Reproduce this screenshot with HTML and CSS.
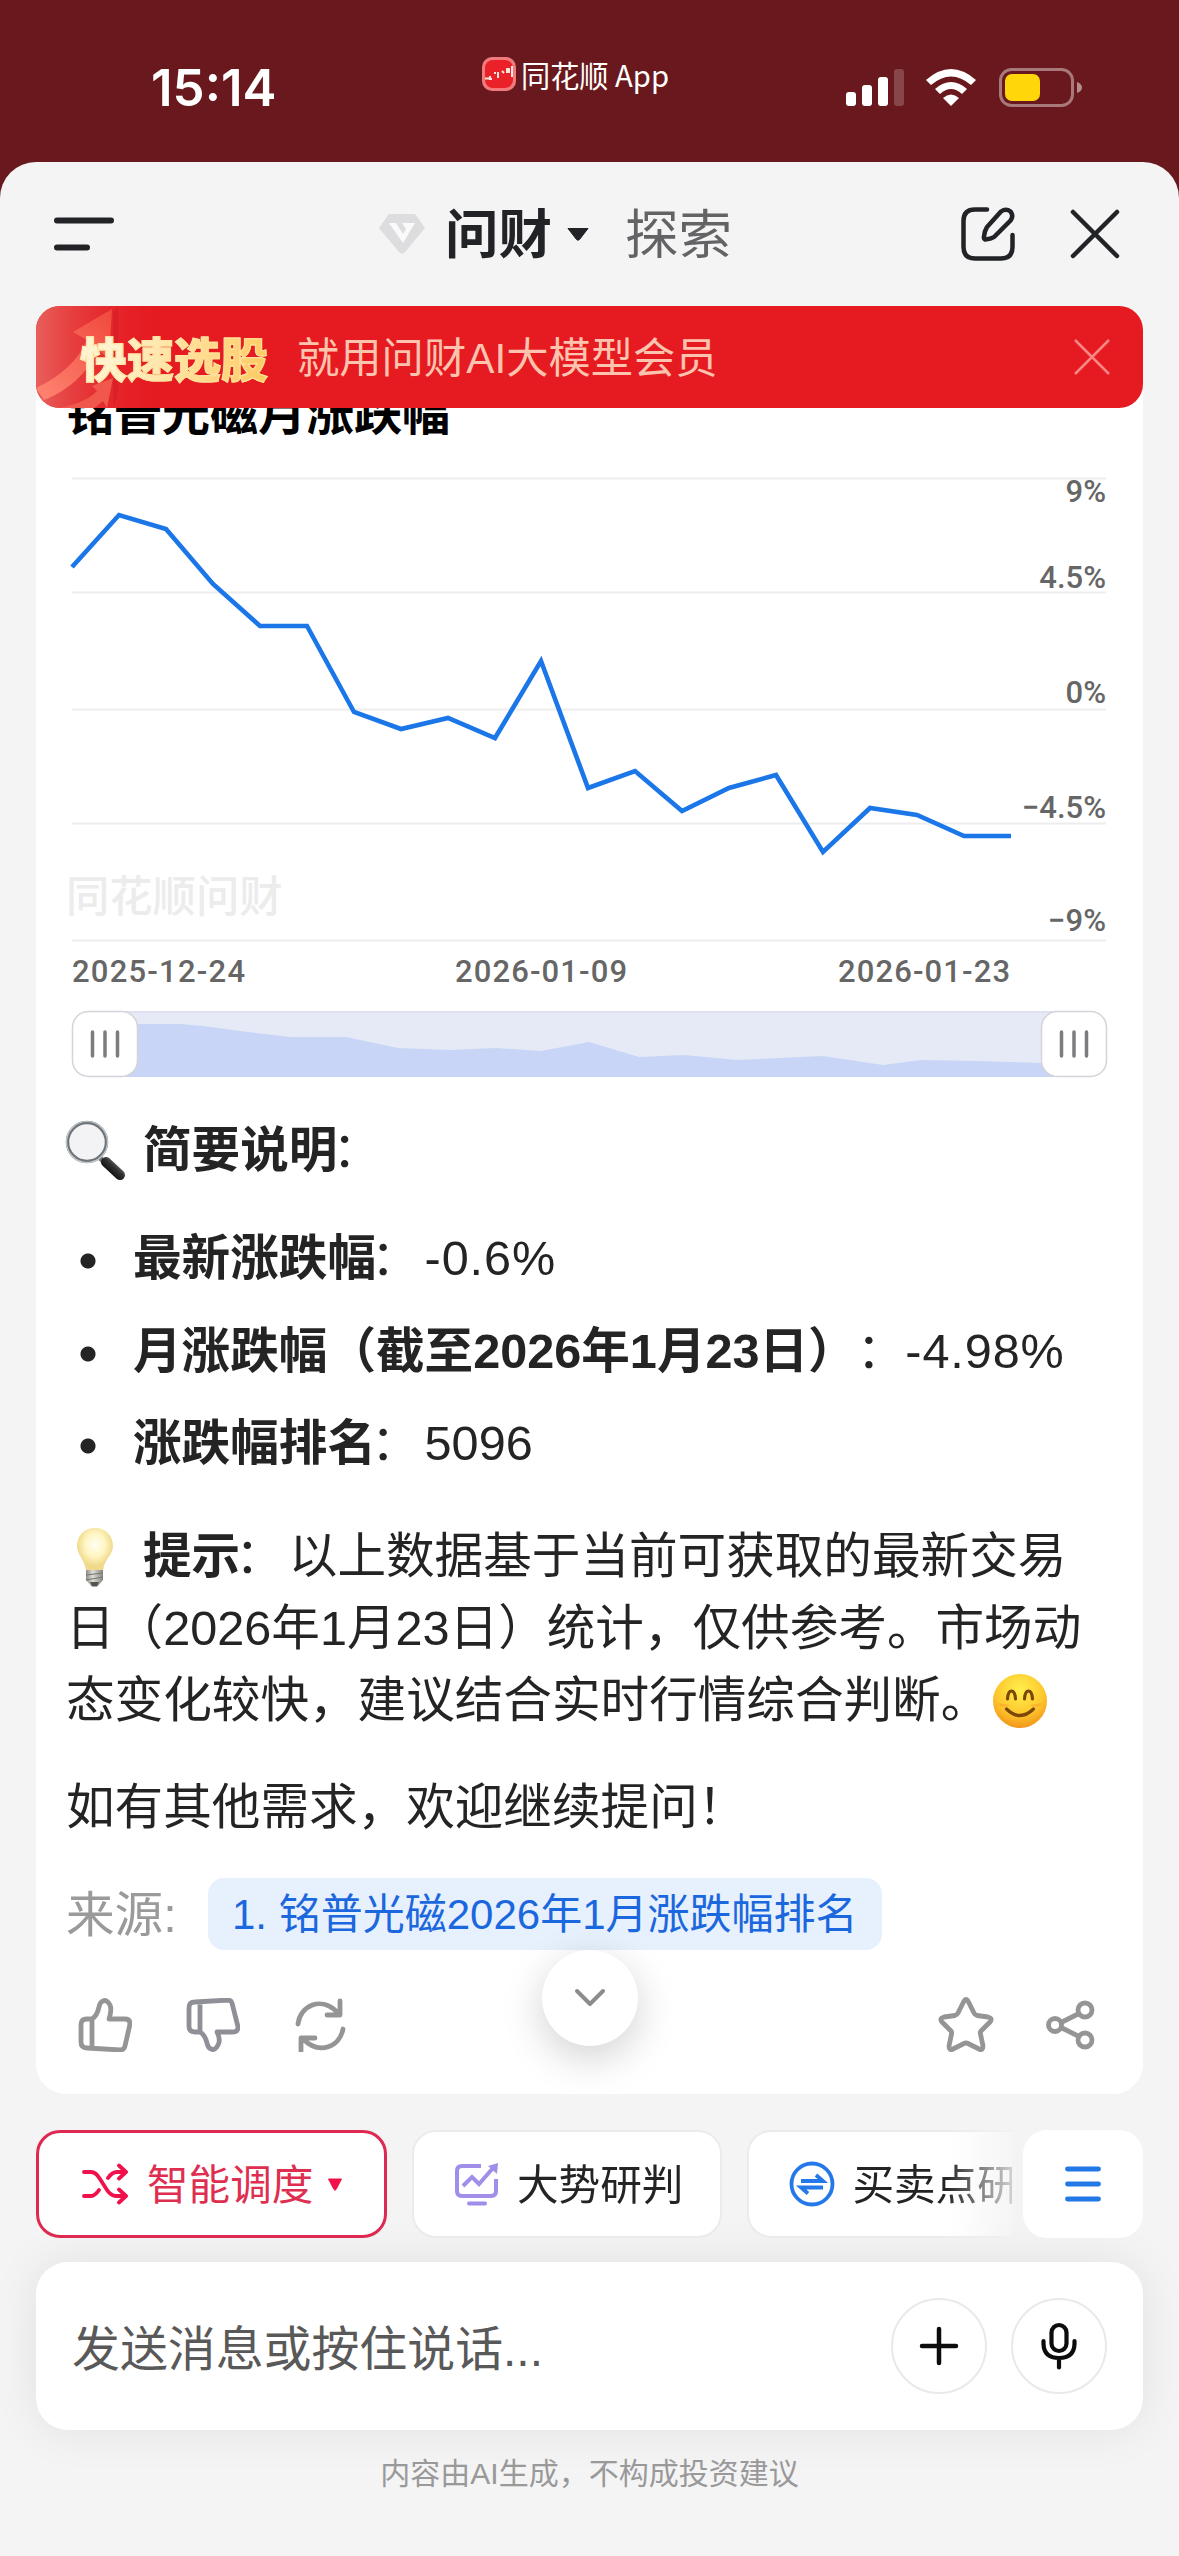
FILE: index.html
```html
<!DOCTYPE html>
<html lang="zh-CN">
<head>
<meta charset="utf-8">
<title>问财</title>
<link rel="stylesheet" href="styles.css">
</head>
<body>
<header class="status">
  <div class="time">15:14</div>
  <div class="app-tag">
    <svg width="34" height="34" viewBox="0 0 34 34"><rect width="34" height="34" rx="10" fill="#f07a7c"/><rect x="3" y="3" width="28" height="28" rx="8" fill="#ea2128"/><path d="M3 21.500h4M8 19v3h2M12 16h2M16 15v6M20 14l2 2M25 11v5M27 11v5M30 9v11" stroke="#fde6dc" stroke-width="2" fill="none"/></svg>
    <span>同花顺 App</span>
  </div>
  <div class="indicators">
    <svg width="236" height="42" viewBox="846 67 236 42">
      <g fill="#fff"><rect x="846" y="92" width="10" height="14" rx="3"/><rect x="862" y="85" width="10" height="21" rx="3"/><rect x="878" y="77" width="10" height="29" rx="3"/><rect x="894" y="69" width="10" height="37" rx="3" opacity=".2"/></g>
      <path d="M926 80Q951 58 976 80L971 85Q951 68 931 85Z" fill="#fff"/>
      <path d="M935 89Q951 75 967 89L962 94Q951 84 940 94Z" fill="#fff"/>
      <path d="M943 98Q951 91 959 98L951 106Z" fill="#fff"/>
      <rect x="1000.500" y="69.500" width="72" height="36" rx="11" fill="none" stroke="#fff" stroke-opacity=".42" stroke-width="3"/>
      <rect x="1005" y="74" width="35" height="27" rx="7" fill="#ffd60a"/>
      <path d="M1077 82q5 2 5 5.500t-5 5.500z" fill="#fff" opacity=".5"/>
    </svg>
  </div>
</header>

<main class="sheet">
  <nav class="topbar">
    <svg class="menu" width="62" height="36" viewBox="0 0 62 36"><path d="M4 4.500H58M4 31.500H34" stroke="#222326" stroke-width="6" stroke-linecap="round"/></svg>
    <div class="tabs">
      <svg class="gem" width="46" height="40" viewBox="0 0 46 40"><path d="M10 0H36L46 14 26 38Q23 41 20 38L0 14Z" fill="#dddddf"/><path d="M10 9H17L24 20 27 15 23 9H36L24 29Z" fill="#fafafa"/></svg>
      <b class="tab-on">问财</b>
      <svg class="caret" width="22" height="13" viewBox="0 0 22 13"><path d="M1 .5H21L12.500 11.500Q11 13 9.500 11.500Z" fill="#222326" stroke="#222326"/></svg>
      <span class="tab">探索</span>
    </div>
    <div class="tools">
      <svg width="56" height="56" viewBox="0 0 56 56" fill="none" stroke="#222326" stroke-width="4.500" stroke-linecap="round"><path d="M27 3.500H15Q3.500 3.500 3.500 15V41Q3.500 52.500 15 52.500H41Q52.500 52.500 52.500 41V29"/><path d="M41 5.500Q46 2 50.500 5.500 54 10 50.500 14.500L34 31Q31 33 25 33.500 23.500 33 24 30.500 24.500 25 27 21Z"/></svg>
      <svg width="50" height="50" viewBox="0 0 50 50"><path d="M3 3L47 47M47 3L3 47" stroke="#222326" stroke-width="4.500" stroke-linecap="round"/></svg>
    </div>
  </nav>

  <section class="banner">
    <svg class="banner-art" width="130" height="102" viewBox="0 0 130 102">
      <defs>
        <linearGradient id="glow"><stop offset="0" stop-color="#e8605c"/><stop offset="1" stop-color="#e51b21" stop-opacity="0"/></linearGradient>
        <linearGradient id="arrow" x1="0" y1="1" x2="1" y2="0"><stop offset="0" stop-color="#ff8672"/><stop offset="1" stop-color="#f0483c"/></linearGradient>
      </defs>
      <rect width="130" height="102" fill="url(#glow)"/>
      <path d="M77 6L82 0V90L77 100Z" fill="#b81820" opacity=".25"/>
      <path d="M0 82Q38 64 51 34L37 26 76 3 73 54 63 44Q44 80 8 94Z" fill="url(#arrow)"/>
      <path d="M22 102Q50 97 61 85L56 80 77 72 71 102 67 95 58 102Z" fill="#f0584c"/>
    </svg>
    <strong class="banner-title">快速选股</strong>
    <span class="banner-text">就用问财AI大模型会员</span>
    <svg class="banner-x" width="38" height="38" viewBox="0 0 38 38"><path d="M2 2L36 36M36 2L2 36" stroke="#f98585" stroke-width="2.500"/></svg>
  </section>

  <article class="card">
    <h2 class="chart-title">铭普光磁月涨跌幅</h2>
    <svg class="chart" width="1107" height="653" viewBox="36 437 1107 653">
      <path d="M72 478.500H1106M72 592.500H1106M72 709.500H1106M72 823.500H1106M72 940.500H1106" stroke="#ededed" stroke-width="2"/>
      <text class="mark" x="66" y="912">同花顺问财</text>
      <polyline fill="none" stroke="#1b76e8" stroke-width="4.600" points="72,567 119,515 166,529 213,584 260,626 307,626 354,712 401,729 448,718 495,738 541,661 588,788 635,771 682,811 729,788 776,775 823,852 870,808 917,815 964,836 1011,836"/>
      <g class="axis" text-anchor="end"><text x="1106" y="502">9%</text><text x="1106" y="588">4.5%</text><text x="1106" y="703">0%</text><text x="1106" y="818">−4.5%</text><text x="1106" y="931">−9%</text></g>
      <g class="axis"><text x="72" y="982" textLength="173">2025-12-24</text><text x="455" y="982" textLength="172">2026-01-09</text><text x="838" y="982" textLength="172">2026-01-23</text></g>
      <rect x="105" y="1011" width="968" height="66" fill="#e5eaf6"/>
      <path d="M105 1012H1073" stroke="#dfe0f2" stroke-width="2"/>
      <path d="M105 1077V1026L135 1024H180L203 1026 248 1032 290 1037H346L398 1048 451 1050 496 1048 541 1051 589 1042 639 1057 684 1055 737 1060 823 1056 883 1065 921 1060 977 1061 1041 1063 1073 1065V1077Z" fill="#c9d5f7"/>
      <g fill="#fff" stroke="#d4d4da" stroke-width="1.500"><rect x="72.500" y="1011.500" width="65" height="65" rx="16"/><rect x="1041.500" y="1011.500" width="65" height="65" rx="16"/></g>
      <path d="M92.500 1032V1056M105 1032V1056M117.500 1032V1056M1061.500 1032V1056M1074 1032V1056M1086.500 1032V1056" stroke="#7c7c80" stroke-width="3.500" stroke-linecap="round"/>
    </svg>

    <div class="answer">
      <p class="line heading">
        <svg class="emoji" width="62" height="62" viewBox="0 0 62 62"><defs><linearGradient id="handle" x1="0" y1="1" x2="1" y2="0"><stop offset="0" stop-color="#000"/><stop offset=".6" stop-color="#333"/><stop offset="1" stop-color="#888"/></linearGradient></defs><path d="M34 37L40 43" stroke="#777" stroke-width="5"/><path d="M41 42L55 55" stroke="url(#handle)" stroke-width="10" stroke-linecap="round"/><circle cx="22" cy="22" r="19.500" fill="#f3f3f5" stroke="#6f7479" stroke-width="3.500"/><circle cx="22" cy="22" r="20.500" fill="none" stroke="#c6ccd2" stroke-width="1.200"/></svg><b>简要说明</b><span class="colon">：</span>
      </p>
      <ul class="facts">
        <li><b>最新涨跌幅</b><span class="colon">：</span><span class="value">-0.6%</span></li>
        <li><b>月涨跌幅（截至2026年1月23日）</b>：<span class="value">-4.98%</span></li>
        <li><b>涨跌幅排名</b><span class="colon">：</span>5096</li>
      </ul>
      <p class="line tip">
        <svg class="emoji" width="62" height="62" viewBox="0 0 62 62"><defs><radialGradient id="bulb" cy=".4"><stop offset="0" stop-color="#fffef2"/><stop offset=".55" stop-color="#fff6c4"/><stop offset="1" stop-color="#f0d98a"/></radialGradient><linearGradient id="cap"><stop offset="0" stop-color="#8c8c88"/><stop offset=".4" stop-color="#deded8"/><stop offset="1" stop-color="#85857f"/></linearGradient></defs><path d="M30 2C19 2 12 10 12 20 12 29 19 32 21 44H38C40 32 48 29 48 20 48 10 41 2 30 2Z" fill="url(#bulb)"/><path d="M21 44H38V54L33 60H26L21 54Z" fill="url(#cap)"/><path d="M21 49L38 47M21 54L38 51" stroke="#77776f" stroke-width="1.200"/><path d="M25 56H34L32 60.500H27Z" fill="#55554f"/></svg><b>提示</b><span class="colon">：</span>以上数据基于当前可获取的最新交易<br>日（2026年1月23日）统计，仅供参考。市场动<br>态变化较快，建议结合实时行情综合判断。<svg class="emoji smile" width="56" height="56" viewBox="0 0 56 56"><defs><radialGradient id="face" cy=".3" r=".75"><stop offset="0" stop-color="#fff04e"/><stop offset=".6" stop-color="#fec72c"/><stop offset="1" stop-color="#f08a18"/></radialGradient></defs><circle cx="28" cy="28" r="27" fill="url(#face)"/><path d="M6 30a7 6 0 0 0 12 2M38 32a7 6 0 0 0 12-2" fill="#f98a2a" opacity=".35"/><path d="M15.500 26Q16 18 19.500 18T23.500 26M32.500 26Q33 18 36.500 18T40.500 26" fill="none" stroke="#7a4708" stroke-width="3.200" stroke-linecap="round"/><path d="M14.500 36Q28 49 41.500 36" fill="none" stroke="#7a4708" stroke-width="3.200" stroke-linecap="round"/></svg>
      </p>
      <p class="line closing">如有其他需求，欢迎继续提问！</p>
      <div class="source"><span>来源:</span><a class="ref">1. 铭普光磁2026年1月涨跌幅排名</a></div>
    </div>

    <div class="actions">
      <svg width="54" height="54" viewBox="0 0 54 54"><path d="M14 21H9Q3 21 3 27V44Q3 50 9 50L42 52Q46 52 47 48L52 26Q52 21 47 21H31Q34 12 32 7 29 1 25 3 22 4 21 9 19 18 14 21ZM14 21V50"/></svg>
      <svg class="down" width="54" height="54" viewBox="0 0 54 54"><path d="M14 34H9Q3 34 3 28V10Q3 4 9 4L42 2Q45 2 46 5L52 29Q52 34 47 34H31Q35 42 32 47 29 53 25 51 22 50 21 45 19 37 14 34ZM14 34V4"/></svg>
      <svg class="reload" width="54" height="54" viewBox="0 0 54 54"><path d="M4 26C6 8 27-3 44 15M46 3V17H33M49 31C46 48 26 58 9 41M7 53V40H21"/></svg>
      <svg class="star" width="58" height="56" viewBox="0 0 58 56"><path d="M26.500 5Q29 0 31.500 5L37 16Q38 18 40 18.500L51 20Q56 21 53 25L44 34Q43 35 43.500 37L46 49Q46 54 42 52L31 46.500Q29 45.500 27 46.500L16 52Q12 54 12 49L14.500 37Q15 35 14 34L5 25Q2 21 7 20L18 18.500Q20 18 21 16Z"/></svg>
      <svg width="52" height="52" viewBox="0 0 52 52"><circle cx="10" cy="26" r="6.500"/><circle cx="40" cy="11" r="7"/><circle cx="40" cy="41" r="7"/><path d="M17 23L33 15M17 29L33 37"/></svg>
    </div>
    <button class="to-end"><svg width="34" height="20" viewBox="0 0 34 20"><path d="M4 3L17 16 30 3" fill="none" stroke="#8c8c8c" stroke-width="4" stroke-linecap="round" stroke-linejoin="round"/></svg></button>
  </article>

  <div class="skills">
    <div class="skill-list">
      <div class="chip active">
        <svg width="46" height="42" viewBox="0 0 46 42" fill="none" stroke="#f0104a" stroke-width="3.800" stroke-linecap="round" stroke-linejoin="round"><path d="M2 9H9Q14 9 18 16L25 27Q29 33 34 33H43M2 33H9Q13 33 17 27M26 15Q30 9 35 9H43M37 2.500L44 9 37 15.500M37 26.500L44 33 37 39.500"/></svg>
        <span>智能调度</span>
        <svg class="tri" width="16" height="13" viewBox="0 0 16 13"><path d="M1.500 1H14.500L9 11.500Q8 13 7 11.500Z" fill="#f0104a" stroke="#f0104a"/></svg>
      </div>
      <div class="chip">
        <svg width="46" height="44" viewBox="0 0 46 44" fill="none" stroke="#a08ee8" stroke-width="4"><path d="M27 4H8Q3 4 3 9V29Q3 34 8 34H37Q42 34 42 29V17M9 24L18 15 25 22 39 6"/><path d="M34 4L44 1 43 12Z" fill="#a08ee8" stroke="none"/><path d="M15 41.500H31" stroke-linecap="round"/></svg>
        <span>大势研判</span>
      </div>
      <div class="chip">
        <svg width="46" height="46" viewBox="0 0 46 46" fill="none" stroke="#2478e8" stroke-width="3.800"><circle cx="23" cy="23" r="20.500"/><path d="M12 20H34L27 14M34 26.500H12L19 32.500"/></svg>
        <span>买卖点研判</span>
      </div>
    </div>
    <button class="more"><svg width="36" height="38" viewBox="0 0 36 38"><path d="M2.500 4H33.500M2.500 19H33.500M2.500 34H33.500" stroke="#2279e6" stroke-width="4.800" stroke-linecap="round"/></svg></button>
  </div>

  <div class="composer">
    <span class="placeholder">发送消息或按住说话...</span>
    <button class="round"><svg width="40" height="40" viewBox="0 0 40 40"><path d="M3 20H37M20 3V37" stroke="#0c0c0c" stroke-width="4.500" stroke-linecap="round"/></svg></button>
    <button class="round"><svg width="40" height="48" viewBox="0 0 40 48" fill="none" stroke="#0c0c0c" stroke-width="4.200" stroke-linecap="round"><rect x="12.500" y="3" width="15" height="26" rx="7.500"/><path d="M4.500 19V22Q5 36 20 36T35.500 22V19M20 36V45.500"/></svg></button>
  </div>
  <footer class="note">内容由AI生成，不构成投资建议</footer>
</main>
</body>
</html>
```
FILE: styles.css
```css
* { box-sizing: border-box; margin: 0; padding: 0; }
body {
  width: 1179px;
  height: 2556px;
  overflow: hidden;
  background: #69191d;
  color: #242424;
  font-family: "Liberation Sans", "Noto Sans CJK SC", sans-serif;
  text-spacing-trim: space-all;
  white-space: nowrap;
}
svg { display: block; flex: none; }
button { border: 0; background: none; display: flex; align-items: center; justify-content: center; }

.status { display: grid; grid-template-columns: 482px 364px 1fr; height: 162px; align-items: start; }
.time { padding: 58px 0 0 151px; font: 600 51px/60px Inter, sans-serif; color: #fff; }
.app-tag { display: flex; align-items: center; gap: 5px; margin-top: 56px; height: 36px; color: #fff; font: 29.2px/36px "Noto Sans CJK SC", sans-serif; }
.indicators { padding-top: 67px; }

.sheet { height: 2394px; background: #f4f4f5; border-radius: 36px 36px 0 0; }
.topbar { position: relative; display: flex; align-items: center; height: 144px; padding: 0 59px 0 53px; }
.tabs { display: flex; align-items: center; margin-left: 264px; font-size: 53.5px; line-height: 72px; }
.gem { margin-right: 20px; }
.tab-on, .tab { padding-top: 4px; }
.tab-on { color: #222326; width: 122px; }
.caret { margin-right: 36px; }
.tab { color: #636366; }
.tools { display: flex; align-items: center; gap: 54px; margin-left: auto; }

.banner {
  position: relative;
  z-index: 2;
  display: flex;
  align-items: center;
  height: 102px;
  margin: 0 36px;
  padding: 0 32px 0 44px;
  border-radius: 24px;
  overflow: hidden;
  background: #e51b21;
}
.banner-art { position: absolute; left: 0; top: 0; }
.banner-title {
  position: relative;
  width: 217px;
  font: 900 47px/60px "Noto Sans CJK SC", sans-serif;
  background: linear-gradient(100deg, #fff3cf 15%, #ffcb62 85%);
  -webkit-background-clip: text;
  background-clip: text;
  color: transparent;
  -webkit-text-stroke: 1px #ffe3a0;
}
.banner-text { padding-top: 3px; font-size: 42.3px; line-height: 60px; color: #fdc3ae; }
.banner-x { margin-left: auto; }

.card { position: relative; height: 1728px; margin: -42px 36px 36px; padding-top: 19px; background: #fff; border-radius: 30px; }
.chart-title { height: 52px; padding-left: 30px; font: 700 48px/48px "Noto Sans CJK SC", sans-serif; color: #000; }
.axis { font: 500 31px Roboto, sans-serif; fill: #666; }
.mark { font: 500 43.3px "Noto Sans CJK SC", sans-serif; fill: #ececec; }

.answer { padding: 24px 31px 0; font-size: 48.6px; line-height: 72px; }
.emoji { display: inline-block; vertical-align: -15px; margin: 0 16px 0 -1px; }
.smile { margin: 0 0 0 3px; vertical-align: -12px; }
.line { height: 72px; margin-left: -1px; }
.colon { margin: 0 5px 0 -5px; }
.value { letter-spacing: 0.9px; }
.facts { display: grid; gap: 20.5px; margin-top: 36px; list-style: none; }
.facts li { display: flex; height: 72px; padding-left: 66px; background: radial-gradient(circle at 21px 39px, #242424 7px, transparent 8px); }
.tip { height: 216px; margin-top: 41px; }
.closing { margin-top: 35px; }
.source { display: flex; align-items: center; gap: 32px; height: 72px; margin-top: 35px; color: #9a9a9a; }
.source span { width: 109px; padding-top: 2px; text-indent: -1px; }
.ref { width: 674px; padding: 1px 0 0 24px; line-height: 71px; border-radius: 16px; background: #e7f0fd; color: #1b67dd; font-size: 42px; }

.actions { display: flex; align-items: center; gap: 54px; height: 56px; margin-top: 47px; padding: 0 46px 0 42px; fill: none; stroke: #959595; stroke-width: 4.8; stroke-linejoin: round; stroke-linecap: round; }
.down { stroke: #8f8f98; }
.star { margin: 0 -4px 0 auto; }
.to-end { position: absolute; left: 506px; top: 1584px; width: 96px; height: 96px; border-radius: 50%; background: #fff; box-shadow: 0 12px 40px rgba(0, 0, 0, .18); }

.skills { display: flex; gap: 11px; height: 108px; padding: 0 36px; }
.skill-list { display: flex; gap: 25px; width: 976px; overflow: hidden; -webkit-mask: linear-gradient(90deg, #000 910px, transparent 990px); mask: linear-gradient(90deg, #000 910px, transparent 990px); }
.chip { display: flex; flex: none; align-items: center; gap: 17px; height: 108px; padding: 0 37px 0 40px; border: 2px solid #ebebeb; border-radius: 24px; background: #fff; font-size: 41.6px; }
.chip span { margin-top: -4px; }
.chip.active { width: 351px; padding-left: 43px; border: 3px solid #de2a52; color: #de2f51; gap: 19px; }
.tri { margin-left: -5px; }
.more { width: 120px; height: 108px; border-radius: 24px; background: #fff; }

.composer { display: flex; align-items: center; gap: 24px; height: 168px; margin: 24px 36px 0; padding: 0 36px; border-radius: 32px; background: #fff; box-shadow: 0 0 48px rgba(0, 0, 0, .08); }
.placeholder { flex: 1; margin-top: -3px; color: #595959; font-size: 47.9px; }
.round { width: 96px; height: 96px; border: 2px solid #e9e9e9; border-radius: 50%; }
.note { margin-top: 24px; text-align: center; font-size: 30px; line-height: 40px; color: #999; }
```
